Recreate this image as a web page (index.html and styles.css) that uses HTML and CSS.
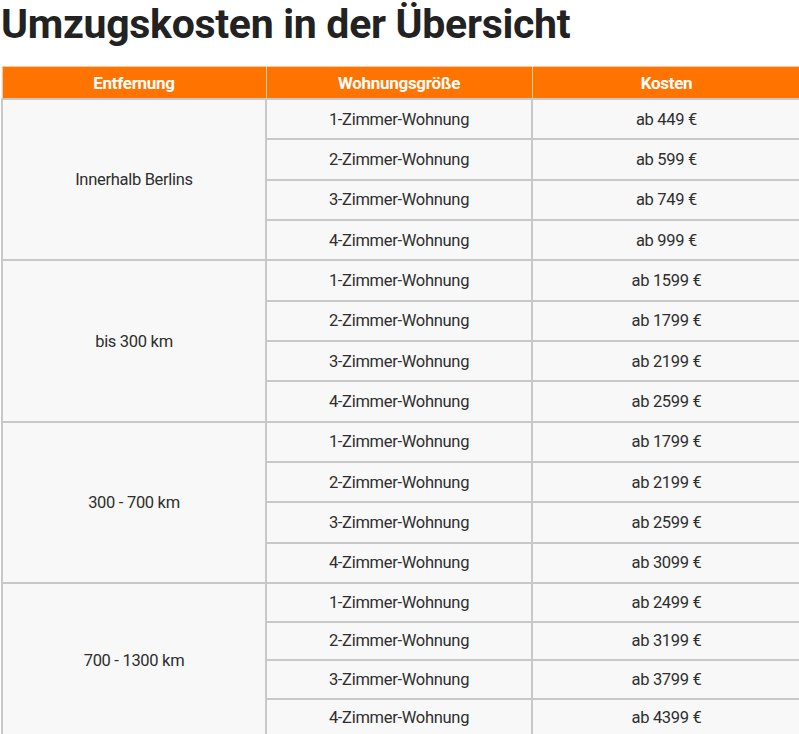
FILE: index.html
```html
<!DOCTYPE html>
<html lang="de">
<head>
<meta charset="utf-8">
<title>Umzugskosten in der Übersicht</title>
<link rel="stylesheet" href="styles.css">
</head>
<body>
<main class="page">
  <h1 class="title">Umzugskosten in der Übersicht</h1>
  <table class="costs">
    <thead>
      <tr><th class="c1">Entfernung</th><th class="c2">Wohnungsgröße</th><th class="c3">Kosten</th></tr>
    </thead>
    <tbody>
      <tr><td rowspan="4" class="dist">Innerhalb Berlins</td><td>1-Zimmer-Wohnung</td><td>ab 449 €</td></tr>
      <tr><td>2-Zimmer-Wohnung</td><td>ab 599 €</td></tr>
      <tr><td>3-Zimmer-Wohnung</td><td>ab 749 €</td></tr>
      <tr><td>4-Zimmer-Wohnung</td><td>ab 999 €</td></tr>
    </tbody>
    <tbody>
      <tr><td rowspan="4" class="dist">bis 300 km</td><td>1-Zimmer-Wohnung</td><td>ab 1599 €</td></tr>
      <tr><td>2-Zimmer-Wohnung</td><td>ab 1799 €</td></tr>
      <tr><td>3-Zimmer-Wohnung</td><td>ab 2199 €</td></tr>
      <tr><td>4-Zimmer-Wohnung</td><td>ab 2599 €</td></tr>
    </tbody>
    <tbody>
      <tr><td rowspan="4" class="dist">300 - 700 km</td><td>1-Zimmer-Wohnung</td><td>ab 1799 €</td></tr>
      <tr><td>2-Zimmer-Wohnung</td><td>ab 2199 €</td></tr>
      <tr><td>3-Zimmer-Wohnung</td><td>ab 2599 €</td></tr>
      <tr><td>4-Zimmer-Wohnung</td><td>ab 3099 €</td></tr>
    </tbody>
    <tbody class="compact">
      <tr><td rowspan="4" class="dist">700 - 1300 km</td><td>1-Zimmer-Wohnung</td><td>ab 2499 €</td></tr>
      <tr><td>2-Zimmer-Wohnung</td><td>ab 3199 €</td></tr>
      <tr><td>3-Zimmer-Wohnung</td><td>ab 3799 €</td></tr>
      <tr><td>4-Zimmer-Wohnung</td><td>ab 4399 €</td></tr>
    </tbody>
  </table>
</main>
</body>
</html>
```

FILE: styles.css
```css
html, body {
  margin: 0;
  padding: 0;
  background: #ffffff;
}

body {
  font-family: Roboto, "Noto Sans", "Liberation Sans", sans-serif;
  color: #2b2b2b;
}

.page {
  padding: 0 0 0 1px;
}

.title {
  margin: 0;
  padding-top: 2px;
  height: 66px;
  box-sizing: border-box;
  font-size: 41px;
  line-height: 44px;
  font-weight: 700;
  letter-spacing: -0.3px;
  color: #222222;
}

.costs {
  width: 796px;
  border-collapse: collapse;
  table-layout: fixed;
  background: #f8f8f8;
}

.costs th {
  background: #ff7300;
  color: #ffffff;
  font-weight: 700;
  font-size: 17px;
  height: 31px;
  padding: 0;
  border: 1px solid #ffc9a0;
  letter-spacing: -0.3px;
}

.c1 { width: 263px; }
.c2 { width: 265px; }
.c3 { width: 268px; }

.costs td {
  height: 40.35px;
  padding: 0;
  text-align: center;
  vertical-align: middle;
  font-size: 16.5px;
  color: #2e2e2e;
  border: 2px solid #c8c8c8;
  box-sizing: border-box;
  letter-spacing: -0.3px;
}

.compact td {
  height: 38.5px;
}
```
